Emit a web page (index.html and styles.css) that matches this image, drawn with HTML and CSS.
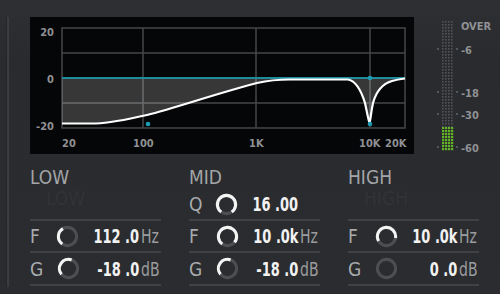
FILE: index.html
```html
<!DOCTYPE html>
<html lang="en">
<head>
  <meta charset="UTF-8">
  <title>EQ</title>
  <link rel="stylesheet" href="styles.css">
</head>
<body>

<div class="app">
  <div class="rail"></div>
  <div class="main">

    <div class="top">
      <div class="graph">
        <svg width="384" height="137" viewBox="30 17 384 137">
          <g class="grid">
            <rect x="62" y="28" width="343" height="100" fill="none"/>
            <line x1="143" y1="28" x2="143" y2="128"/>
            <line x1="256" y1="28" x2="256" y2="128"/>
            <line x1="370" y1="28" x2="370" y2="128"/>
            <line x1="62" y1="53" x2="405" y2="53"/>
            <line x1="62" y1="103" x2="405" y2="103"/>
          </g>
          <!-- area between 0 dB and the curve -->
          <path class="area" d="M62 123.5 L96 123.5 C110 123 125 120 147 115 C175 108 215 94 257 83 C268 80.5 276 79.5 290 79.5 L348 79.5 C356 81 361 90 365 103 C367 112 368.5 121 369.5 122.5 C370.5 121 371 112 373 103 C376 92 382 84 392 81 C397 79.5 401 79 405 78.5 L405 78 L62 78 Z"/>
          <line class="zero" x1="62" y1="78" x2="405" y2="78"/>
          <path class="curve" d="M62 123.5 L96 123.5 C110 123 125 120 147 115 C175 108 215 94 257 83 C268 80.5 276 79.5 290 79.5 L348 79.5 C356 81 361 90 365 103 C367 112 368.5 121 369.5 122.5 C370.5 121 371 112 373 103 C376 92 382 84 392 81 C397 79.5 401 79 405 78.5"/>
          <circle class="pt" cx="148" cy="124" r="2.3"/>
          <circle class="pt" cx="370" cy="78" r="2.3"/>
          <circle class="pt" cx="370" cy="124" r="2.3"/>

          <g class="axis">
            <text x="54" y="36" text-anchor="end">20</text>
            <text x="54" y="83" text-anchor="end">0</text>
            <text x="54" y="130" text-anchor="end">-20</text>
            <text x="62" y="147">20</text>
            <text x="133" y="147">100</text>
            <text x="249" y="147">1K</text>
            <text x="359" y="147">10K</text>
            <text x="385" y="147">20K</text>
          </g>
        </svg>
      </div>

      <svg class="meter" width="82" height="137" viewBox="418 17 82 137">
        <defs>
          <pattern id="dots" x="442" y="21" width="3" height="3" patternUnits="userSpaceOnUse">
            <rect width="1.6" height="1.6" fill="#505255"/>
          </pattern>
          <pattern id="lit" x="442" y="127" width="3" height="3" patternUnits="userSpaceOnUse">
            <rect width="2.2" height="2.2" fill="#62b225"/>
          </pattern>
        </defs>
        <rect x="442" y="21" width="12" height="106" fill="url(#dots)"/>
        <rect x="442" y="127" width="12" height="24" fill="url(#lit)"/>
        <g class="ticks">
          <circle cx="438" cy="49" r="0.9"/><circle cx="457" cy="49" r="0.9"/>
          <circle cx="438" cy="92" r="0.9"/><circle cx="457" cy="92" r="0.9"/>
          <circle cx="438" cy="114" r="0.9"/><circle cx="457" cy="114" r="0.9"/>
          <circle cx="438" cy="147" r="0.9"/><circle cx="457" cy="147" r="0.9"/>
        </g>
        <g class="axis">
          <text x="461" y="30">OVER</text>
          <text x="461" y="54">-6</text>
          <text x="461" y="97">-18</text>
          <text x="461" y="119">-30</text>
          <text x="461" y="152">-60</text>
        </g>
      </svg>
    </div>

    <div class="bands">
      <div class="band">
        <div class="band-title">LOW</div>
        <div class="row"><span class="ghost">LOW</span></div>
        <div class="row">
          <span class="key">F</span>
          <svg class="knob" viewBox="0 0 24 24"><circle cx="12" cy="12" r="9.5"/><path d="M6.55 19.78 A9.5 9.5 0 0 1 7.25 3.77"/></svg>
          <span class="val"><span>112 .0</span></span><span class="unit"><span>Hz</span></span>
        </div>
        <div class="row last">
          <span class="key">G</span>
          <svg class="knob" viewBox="0 0 24 24"><circle cx="12" cy="12" r="9.5"/><path d="M4.72 18.11 A9.5 9.5 0 0 1 15.25 3.07"/></svg>
          <span class="val"><span>-18 .0</span></span><span class="unit"><span>dB</span></span>
        </div>
      </div>

      <div class="band">
        <div class="band-title">MID</div>
        <div class="row">
          <span class="key">Q</span>
          <svg class="knob" viewBox="0 0 24 24"><circle cx="12" cy="12" r="9.5"/><path d="M6.55 19.78 A9.5 9.5 0 1 1 17.45 19.78"/></svg>
          <span class="val"><span>16 .00</span></span><span class="unit"></span>
        </div>
        <div class="row">
          <span class="key">F</span>
          <svg class="knob" viewBox="0 0 24 24"><circle cx="12" cy="12" r="9.5"/><path d="M6.55 19.78 A9.5 9.5 0 1 1 19.28 18.11"/></svg>
          <span class="val"><span>10 .0k</span></span><span class="unit"><span>Hz</span></span>
        </div>
        <div class="row last">
          <span class="key">G</span>
          <svg class="knob" viewBox="0 0 24 24"><circle cx="12" cy="12" r="9.5"/><path d="M4.72 18.11 A9.5 9.5 0 0 1 15.25 3.07"/></svg>
          <span class="val"><span>-18 .0</span></span><span class="unit"><span>dB</span></span>
        </div>
      </div>

      <div class="band">
        <div class="band-title">HIGH</div>
        <div class="row"><span class="ghost">HIGH</span></div>
        <div class="row">
          <span class="key">F</span>
          <svg class="knob" viewBox="0 0 24 24"><circle cx="12" cy="12" r="9.5"/><path d="M3.77 16.75 A9.5 9.5 0 1 1 21.36 13.65"/></svg>
          <span class="val"><span>10 .0k</span></span><span class="unit"><span>Hz</span></span>
        </div>
        <div class="row last">
          <span class="key">G</span>
          <svg class="knob" viewBox="0 0 24 24"><circle cx="12" cy="12" r="9.5"/></svg>
          <span class="val"><span>0 .0</span></span><span class="unit"><span>dB</span></span>
        </div>
      </div>
    </div>

  </div>
</div>

</body>
</html>
```

FILE: styles.css
```css
body { margin: 0; width: 500px; height: 294px; overflow: hidden; background: linear-gradient(#2d2f32, #292b2e 20%, #2a2c2f); }
.app { display: flex; padding: 17px 0 0 6px; }
.rail { width: 2px; height: 270px; background: #3b3d41; border-left: 1px solid #222427; }
.main { margin-left: 21px; }

.top { display: flex; align-items: flex-start; height: 137px; }
.graph { width: 384px; height: 137px; background: #050607; }
.graph svg, .meter { display: block; }
.meter { margin-left: 4px; }

.grid line, .grid rect { stroke: #45474a; stroke-width: 1.5; }
.area { fill: rgba(255, 255, 255, 0.2); }
.zero { stroke: #1f8c9e; stroke-width: 2; }
.curve { fill: none; stroke: #fff; stroke-width: 2.2; }
.pt { fill: #1c9cb2; }
.ticks circle { fill: #6a6c6f; }
.axis text { font-family: "DejaVu Sans Condensed", "DejaVu Sans", sans-serif; font-weight: bold; font-size: 11px; fill: #8f9194; }

.bands { display: flex; gap: 28px; margin-top: 13px; }
.band { width: 131px; display: flex; flex-direction: column; }
.band-title { height: 22px; font-family: "DejaVu Sans Condensed", "DejaVu Sans", sans-serif; font-size: 19px; line-height: 21px; color: #a3a5a8; }
.row { height: 30px; display: flex; align-items: center; border-bottom: 2px solid #3f4144; }
.row.last { height: 31px; }
.ghost { align-self: flex-start; margin-left: 16px; font-family: "DejaVu Sans Condensed", "DejaVu Sans", sans-serif; font-size: 19px; line-height: 19px; color: #313336; }
.key { width: 27px; font-family: "DejaVu Sans Condensed", "DejaVu Sans", sans-serif; font-size: 19px; color: #a9abae; }
.knob { width: 23px; height: 23px; flex: none; }
.knob circle { fill: none; stroke: #4c4e51; stroke-width: 3.2; }
.knob path { fill: none; stroke: #f4f4f4; stroke-width: 3.2; }
.val { flex: 1; display: flex; justify-content: flex-end; font-family: "DejaVu Sans Condensed", "DejaVu Sans", sans-serif; font-weight: bold; font-size: 19px; color: #f2f2f2; }
.val span { white-space: nowrap; transform: scaleX(0.76); transform-origin: right center; }
.unit { width: 22px; flex: none; display: flex; font-family: "DejaVu Sans Condensed", "DejaVu Sans", sans-serif; font-size: 19px; color: #9a9c9f; }
.unit span { white-space: nowrap; margin-left: 2px; transform: scaleX(0.82); transform-origin: left center; }
```
